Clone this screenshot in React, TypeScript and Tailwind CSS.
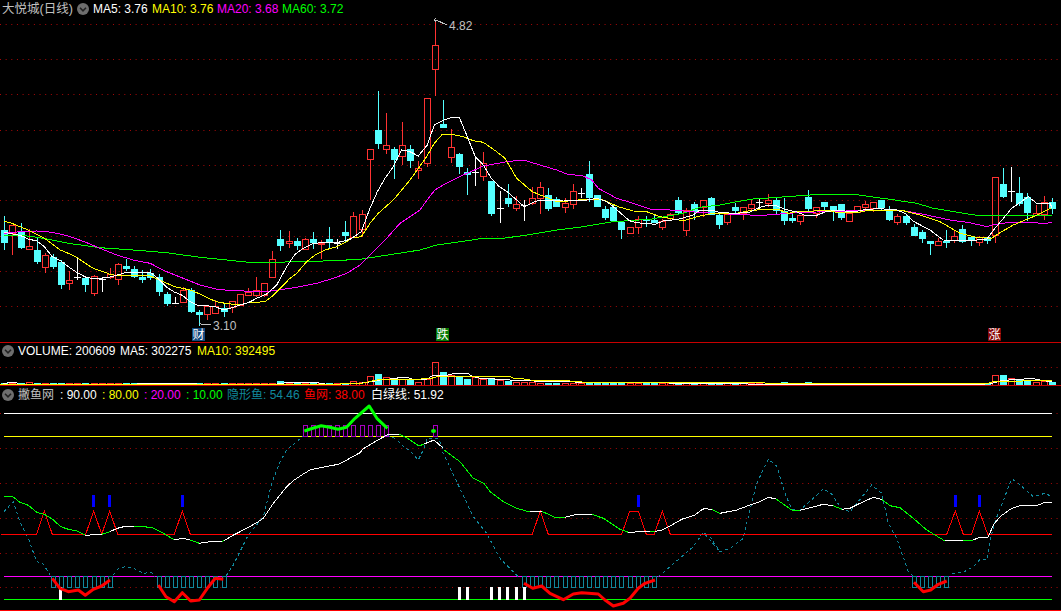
import React from "react";

type C = [string, number, number, number, number];
const candles: C[] = [
["c",216,230,243,250],["r",225,225,233,255],["c",223,232,248,249],["r",229,246,249,250],["c",237,250,262,264],["r",253,255,267,273],["c",254,257,267,269],["c",260,262,285,289],["r",271,280,283,290],["d",257,277,277,280],
["c",276,278,285,292],["r",275,276,293,296],["d",277,279,279,292],["r",268,274,277,279],["r",263,264,279,285],["c",259,266,269,271],["c",266,269,277,278],["c",270,277,280,283],["c",269,273,278,280],["c",274,277,292,296],
["c",292,294,304,306],["d",297,303,303,303],["r",287,290,302,303],["c",288,290,312,313],["c",310,312,315,326],["r",306,306,314,320],["r",300,306,313,313],["c",304,308,312,317],["r",301,301,307,313],["r",294,294,305,305],
["r",288,292,295,296],["r",277,290,295,297],["r",283,283,295,297],["r",251,259,277,277],["c",230,239,246,251],["r",231,241,243,248],["c",238,241,246,250],["r",238,239,249,250],["c",232,239,243,249],["r",240,243,244,259],
["c",227,239,243,248],["d",239,243,243,249],["c",221,232,236,243],["r",212,216,237,238],["r",210,214,229,237],["r",149,149,159,200],["c",91,130,144,149],["r",113,145,149,154],["c",147,149,160,179],["r",122,145,156,165],
["c",145,149,161,168],["r",161,168,170,179],["r",98,98,163,167],["r",20,45,69,96],["c",100,124,128,128],["r",129,147,157,163],["c",153,154,167,174],["c",168,172,175,195],["d",157,172,172,186],["r",152,163,176,181],
["c",181,181,214,216],["d",191,208,208,223],["c",184,198,204,207],["r",196,204,208,211],["d",200,205,205,221],["r",187,198,203,205],["r",182,187,198,214],["c",188,195,209,211],["c",197,199,207,207],["r",198,203,207,213],
["r",184,191,204,209],["d",188,193,193,198],["c",161,174,198,202],["c",195,195,207,207],["c",206,209,218,220],["c",205,207,221,222],["c",222,222,230,239],["r",227,227,233,233],["r",216,219,227,234],["c",216,219,221,227],
["c",214,220,223,223],["r",219,221,227,230],["r",213,214,218,220],["c",197,200,213,214],["r",208,210,230,236],["c",202,204,212,220],["r",200,200,207,217],["c",197,198,215,215],["c",213,215,225,229],["r",214,214,222,225],
["c",203,207,211,213],["r",207,207,213,220],["r",200,204,208,212],["d",199,202,202,209],["r",194,200,203,207],["c",198,200,211,214],["c",198,211,221,225],["c",214,218,221,223],["r",215,215,221,225],["c",190,197,209,211],
["r",207,207,213,218],["c",202,202,207,210],["c",206,206,212,221],["c",204,204,218,220],["r",213,213,221,221],["r",206,206,212,212],["r",201,204,207,211],["r",202,202,208,212],["c",200,200,208,210],["c",206,209,220,221],
["r",214,216,222,225],["c",214,216,223,225],["c",224,227,236,236],["c",230,232,239,243],["c",241,241,244,255],["r",238,241,245,246],["c",230,241,243,248],["r",231,236,240,243],["c",225,229,242,243],["c",237,237,241,246],
["r",236,237,242,246],["c",237,237,241,244],["r",177,177,235,243],["c",168,184,197,198],["d",167,191,191,202],["c",177,193,204,206],["c",193,197,213,221],["r",205,213,215,215],["r",196,202,214,220],["c",198,202,209,214],
];

const cx = (i: number) => Math.round(4.3 + 8.12 * i);

const volH: Record<number, number> = {3:3,34:4,43:4,44:3,45:9,46:11,47:8,48:5,49:6,50:5,51:3,52:6,53:23,54:13,55:10,56:8,57:6,58:8,59:6,60:7,61:5,62:4,63:3,64:3,65:3,96:3,99:3,122:10,123:10,124:7,125:5,126:4,127:3,128:4,129:3};

const Z = (ox: number, oy: number, p: number[], sx = 3, sy = 3) => {
  const out: string[] = [];
  for (let i = 0; i < p.length; i += 2) out.push(`${(ox + p[i] / sx).toFixed(1)},${(oy + p[i + 1] / sy).toFixed(1)}`);
  return out;
};

const maWhite = [
  ...Z(0,170,[12,187,60,196,85,207,110,213,133,230,157,260,181,272,205,290,230,307,258,322,282,326,328,322,352,315,376,308,452,308,470,322,500,352,523,366,547,376,570,395,595,407,620,407,646,410,670,420,694,414,720,405,745,398,770,385,800,372,830,345,860,290,885,253,910,235,935,222,960,218,1010,218,1035,212]),
  ...Z(350,10,[0,688,34,665,58,600,82,545,105,505,130,470,155,420,180,425,205,438,232,405,253,345,277,332,305,322,328,322,352,380,376,440,400,465,424,505,448,530,472,545,500,570,523,590,547,578,571,570,640,570,700,572,740,565,770,575,790,590,838,632,860,638,915,643,940,633,985,628,1030,615]),
  ...Z(700,150,[0,180,35,180,60,188,110,190,150,186,180,172,205,166,230,168,255,178,290,186,315,196,350,196,375,186,400,182,470,184,500,178,540,176,590,180,615,190,640,214,690,240,730,270,800,272,860,268,885,235,935,175,985,140,1010,160,1050,160,1057,175]),
].join(" ");
const maYellow = [
  ...Z(0,170,[12,153,35,160,60,170,85,180,110,193,133,205,157,222,181,240,205,250,230,262,256,280,280,295,304,303,328,312,352,317,376,317,450,318,475,328,523,350,571,360,600,372,625,385,650,395,675,400,720,405,745,398,795,395,815,380,845,350,870,325,890,310,920,275,945,255,975,240,1010,230,1040,215]),
  ...Z(350,10,[0,685,34,680,60,640,85,610,130,570,180,510,230,440,253,400,277,373,305,373,340,380,370,392,400,397,440,425,465,445,500,505,547,545,620,575,670,572,700,568,760,570,805,590,850,603,890,605,930,620,1000,632]),
  ...Z(700,150,[0,198,30,192,60,190,110,190,150,182,190,178,240,180,265,190,295,184,390,182,415,188,470,188,500,182,610,182,660,195,720,215,780,250,830,262,875,265,900,248,940,225,1000,200,1057,172]),
].join(" ");
const maMagenta = [
  ...Z(0,170,[12,190,60,185,110,183,157,187,205,198,253,215,300,235,350,255,400,270,450,280,500,305,550,325,600,345,650,358,700,362,800,365,850,358,900,350,950,340,1000,325,1040,310,1080,285]),
  ...Z(350,10,[75,720,110,685,150,640,210,600,235,565,255,540,280,525,340,495,400,468,470,455,520,450,570,465,620,480,650,492,700,498,725,510,745,535,800,565,850,580,900,597,960,600,1030,605]),
  ...Z(700,150,[0,188,60,190,110,194,190,196,240,192,290,188,350,186,420,184,500,180,610,182,670,193,750,210,810,218,860,230,880,224,920,218,1000,217,1020,220,1040,220,1057,217]),
].join(" ");
const maGreen = [
  ...Z(0,170,[12,195,60,195,110,202,157,210,205,220,300,233,400,240,500,248,600,262,700,272,760,278,900,275,1000,272,1080,268]),
  ...Z(350,10,[210,720,260,705,330,695,400,685,460,685,530,675,620,660,700,650,790,635,900,628,1000,610]),
  ...Z(700,150,[0,172,60,165,110,155,160,147,260,140,360,133,460,133,520,141,590,151,650,160,700,175,780,188,830,196,1057,196]),
].join(" ");

const volWhite = [
  ...Z(0,362,[0,68,24,62,50,62,55,67,410,67,415,64,530,64,590,66,680,68,830,66,860,62,950,62,975,66,1020,66]),
  ...Z(340,362,[0,66,60,64,100,58,130,52,170,50,175,46,200,46,220,52,260,52,275,42,320,40,345,34,385,35,395,42,425,50,500,52,520,56,640,58,700,60,1070,64]),
  ...Z(700,362,[0,65,100,65,240,68,870,66,900,57,945,52,1000,50,1025,55,1057,60]),
].join(" ");
const volYellow = [
  ...Z(0,362,[0,68,1020,67]),
  ...Z(340,362,[0,66,70,63,110,54,220,52,270,50,300,42,350,44,400,43,510,43,520,48,545,50,570,54,640,55,710,58,740,62,1070,62]),
  ...Z(700,362,[0,61,190,61,200,65,860,66,875,60,950,58,1000,55,1055,55]),
].join(" ");

const G = "#00ff00";
const W = "#ffffff";
const wl: [string, string[]][] = [
  [G, Z(0,450,[12,139,37,139,60,157,85,166,110,187,133,193,157,207,182,230,205,238,232,243,256,255])],
  [W, Z(0,450,[256,256,305,253])],
  [G, Z(0,450,[305,253,329,245])],
  [W, Z(0,450,[329,245,352,235,376,229,403,229])],
  [G, Z(0,450,[403,229,455,232,490,250,523,270])],
  [W, Z(0,450,[523,270,547,265,571,270])],
  [G, Z(0,450,[571,270,598,280])],
  [W, Z(0,450,[598,280,623,276,665,274])],
  [G, Z(0,450,[665,274,672,272])],
  [W, [...Z(0,450,[672,272,695,258,720,245,745,232,770,218,790,205,820,160,860,110,880,92,905,75,930,60,960,53,1015,43,1040,30,1080,8]), "363,449","375,441.7","387,435","399,434"]],
  [G, ["399,434","407,438","419,446","424,444"]],
  [W, ["424,444","434,440","443,448"]],
  [G, Z(360,450,[252,0,300,35,340,85,372,100,390,125,430,155,470,175,510,186])],
  [W, Z(360,450,[510,186,545,184])],
  [G, Z(360,450,[545,184,585,202,615,202])],
  [W, Z(360,450,[615,202,650,193,695,193])],
  [G, Z(360,450,[695,193,730,205,780,238,805,247])],
  [W, Z(360,450,[805,247,870,244])],
  [G, Z(360,450,[870,244,885,244])],
  [W, Z(360,450,[885,244,905,241,930,228,965,208,1005,195,1030,176,1055,178])],
  [G, Z(360,450,[1055,178,1080,190])],
  [W, Z(700,450,[0,182,12,176,35,178])],
  [G, Z(700,450,[35,178,60,190])],
  [W, Z(700,450,[60,190,110,180,150,165,180,155,205,142,228,147])],
  [G, Z(700,450,[228,147,275,180,300,181])],
  [W, Z(700,450,[300,181,370,163,400,167])],
  [G, Z(700,450,[400,167,425,178])],
  [W, Z(700,450,[425,178,450,175,480,160,520,142,545,148])],
  [G, Z(700,450,[545,148,570,167,600,173,640,205,680,240,735,273])],
  [W, Z(700,450,[735,273,790,271])],
  [G, Z(700,450,[790,271,818,271])],
  [W, Z(700,450,[818,271,835,263,865,261,880,225,900,200,935,175,960,167,1015,165,1035,157,1056,157])],
];

const teal = "#10889c";
const dashes: string[][] = [
  [...Z(0,450,[12,185,40,155,60,215,85,265,110,335,130,342,150,375])],
  [...Z(0,450,[340,375,355,355,375,350,400,355,430,370,455,367,465,380])],
  [...Z(0,450,[678,378,700,345,745,255,790,200,815,100,840,35,860,0]), "301,438", "308,430"],
  ["387,435", "396,439", "405,448", ...Z(360,450,[148,0,175,30,190,0]), "427,439", "438,438", "443,448", ...Z(360,450,[245,0,290,95,340,200,380,250,420,325,475,380])],
  [...Z(360,450,[895,380,1000,290,1030,247,1080,305])],
  [...Z(700,450,[0,258,10,248,30,260,60,305,90,295,130,265,145,200,170,100,205,28,230,48,255,130,275,178,300,181,370,117,395,132,425,178,450,185,515,105,545,130,565,220,590,265,625,365,640,378])],
  [...Z(700,450,[755,372,790,367,820,350,840,328,860,330,870,270,885,215,935,87,950,95,1000,140,1035,130,1056,140])],
];

const redThick: string[][] = [
  Z(0,450,[157,385,180,415,205,425,235,420,256,436,280,418,305,408,330,390]),
  Z(0,450,[475,405,498,440,523,455,547,428,572,453,598,450,622,415,646,385,670,388]),
  Z(360,450,[492,400,518,415,545,408,570,430,610,449,640,432,665,428,715,432,735,450,760,468,790,460,810,445,835,415,855,400,885,390]),
  Z(700,450,[642,397,670,425,692,420,715,403,740,393]),
];
const greenThick = Z(0,340,[900,273,925,265,950,257,975,262,1000,268,1025,262,1050,235,1092,198,1115,235,1146,265],2.958);

const triangles = [
  [...Z(0,450,[4,253,110,253,133,183,157,253,257,253,281,183,305,253,329,183,353,253,523,253,547,183,571,253]),
   ...Z(360,450,[517,253,541,183,565,253,785,253,809,183,835,183,859,253,883,253,907,183,931,253]),
   ...Z(700,450,[740,253,766,183,790,253,815,253,838,183,863,253,1056,253])],
];

const range = (a: number, b: number) => Array.from({ length: b - a + 1 }, (_, i) => a + i);
const tealBars = [...range(6, 13), ...range(19, 27), ...range(64, 80), ...range(112, 116)];
const purpleBars = [...range(37, 47), 53];
const blueBars = [93.5, 109, 182, 638, 955, 979];
const whiteSticks = [60, 459, 467, 491, 499, 507, 516, 524];

const Dotted = ({ y }: { y: number }) => (
  <line x1="0" x2="1061" y1={y + 0.5} y2={y + 0.5} stroke="#a80808" strokeDasharray="1 4.65" />
);

const Caret = () => (
  <svg width="12" height="12" viewBox="0 0 12 12" className="shrink-0">
    <circle cx="6" cy="6" r="6" fill="#6e6e6e" />
    <path d="M3 4.8 L6 7.8 L9 4.8" fill="none" stroke="#222222" strokeWidth="1.6" />
  </svg>
);

const font = "[font-family:'Liberation_Sans','Noto_Sans_CJK_SC',sans-serif]";

export default function App() {
  return (
    <div className={`w-[1061px] h-[611px] bg-black overflow-hidden flex flex-col text-[12px] leading-none whitespace-nowrap ${font}`}>
      {/* price panel */}
      <section className="relative h-[343px] shrink-0 border-b border-[#c80000] flex flex-col">
        <div className="h-[18px] shrink-0 flex items-center pl-[2px]">
          <span className="w-[75px] text-[12.5px] text-[#c0c0c0]">大悦城(日线)</span>
          <Caret />
          <span className="w-[59px] ml-[4px] text-white">MA5: 3.76</span>
          <span className="w-[65px] text-[#ffff00]">MA10: 3.76</span>
          <span className="w-[65px] text-[#ff00ff]">MA20: 3.68</span>
          <span className="text-[#00ff00]">MA60: 3.72</span>
        </div>
        <svg width="1061" height="324" viewBox="0 18 1061 324" className="block shrink-0">
          {[24, 59, 94, 130, 165, 200, 236, 271, 306].map((y) => <Dotted key={y} y={y} />)}
          <g shapeRendering="crispEdges">
            {candles.map(([t, h, top, bot, low], i) => {
              const x = cx(i);
              if (t === "d") {
                return (
                  <g key={i} stroke="#ffffff">
                    <line x1={x + 0.5} x2={x + 0.5} y1={h} y2={low} />
                    <line x1={x - 3} x2={x + 4} y1={top + 0.5} y2={top + 0.5} />
                  </g>
                );
              }
              if (t === "c") {
                return (
                  <g key={i}>
                    <line x1={x + 0.5} x2={x + 0.5} y1={h} y2={low} stroke="#54ffff" />
                    <rect x={x - 3} y={top} width="7" height={bot - top} fill="#54ffff" />
                  </g>
                );
              }
              return (
                <g key={i} stroke="#ff3232">
                  <line x1={x + 0.5} x2={x + 0.5} y1={h} y2={top} />
                  <line x1={x + 0.5} x2={x + 0.5} y1={bot} y2={low} />
                  <rect x={x - 2.5} y={top + 0.5} width="6" height={bot - top} fill="none" />
                </g>
              );
            })}
            <polyline points={maGreen} fill="none" stroke="#00ff00" />
            <polyline points={maMagenta} fill="none" stroke="#ff00ff" />
            <polyline points={maYellow} fill="none" stroke="#ffff00" />
            <polyline points={maWhite} fill="none" stroke="#ffffff" />
            <polyline points="434,20 436,20 447,25" fill="none" stroke="#c0c0c0" />
            <polyline points="436,18 434,20 436,22" fill="none" stroke="#c0c0c0" />
            <polyline points="199,323 201,324 211,324" fill="none" stroke="#c0c0c0" />
          </g>
          <text x="449" y="30" fontSize="12" fill="#c0c0c0">4.82</text>
          <text x="213" y="329.5" fontSize="12" fill="#c0c0c0">3.10</text>
        </svg>
        <span className="absolute left-[192px] top-[328px] w-[13px] h-[13px] flex items-center justify-center bg-[#12497e] text-white">财</span>
        <span className="absolute left-[436px] top-[328px] w-[13px] h-[13px] flex items-center justify-center bg-[#067a06] text-white">跌</span>
        <span className="absolute left-[988px] top-[328px] w-[13px] h-[13px] flex items-center justify-center bg-[#860606] text-white">涨</span>
      </section>

      {/* volume panel */}
      <section className="h-[43px] shrink-0 flex flex-col">
        <div className="h-[16px] shrink-0 flex items-center pl-[2px]">
          <Caret />
          <span className="w-[102px] ml-[4px] text-white">VOLUME: 200609</span>
          <span className="w-[77px] text-white">MA5: 302275</span>
          <span className="text-[#ffff00]">MA10: 392495</span>
        </div>
        <svg width="1061" height="27" viewBox="0 359 1061 27" className="block shrink-0">
          <Dotted y={367} />
          <g shapeRendering="crispEdges">
            {candles.map(([t], i) => {
              const h = volH[i] ?? 2;
              const x = cx(i);
              return t === "c" ? (
                <rect key={i} x={x - 3} y={385 - h} width="7" height={h} fill="#54ffff" />
              ) : (
                <rect key={i} x={x - 2.5} y={385.5 - h} width="6" height={h} fill="none" stroke="#ff3232" />
              );
            })}
            <polyline points={volWhite} fill="none" stroke="#ffffff" />
            <polyline points={volYellow} fill="none" stroke="#ffff00" />
            <line x1="0" x2="1061" y1="385.5" y2="385.5" stroke="#c80000" />
          </g>
        </svg>
      </section>

      {/* indicator panel */}
      <section className="flex-1 flex flex-col">
        <div className="h-[17px] shrink-0 flex items-center pl-[2px]">
          <Caret />
          <span className="w-[42px] ml-[4px] text-[12px] text-[#c0c0c0]">撇鱼网</span>
          <span className="w-[42px] text-white">: 90.00</span>
          <span className="w-[42px] text-[#ffff00]">: 80.00</span>
          <span className="w-[42px] text-[#ff00ff]">: 20.00</span>
          <span className="w-[41px] text-[#00ff00]">: 10.00</span>
          <span className="w-[77px] text-[#10889c]">隐形鱼: 54.46</span>
          <span className="w-[67px] text-[#ff0000]">鱼网: 38.00</span>
          <span className="text-white">白绿线: 51.92</span>
        </div>
        <svg width="1061" height="208" viewBox="0 403 1061 208" className="block shrink-0">
          {[413, 448, 483, 518, 553, 587].map((y) => <Dotted key={y} y={y} />)}
          <g shapeRendering="crispEdges">
            <line x1="4" x2="1052" y1="413.5" y2="413.5" stroke="#ffffff" />
            <line x1="4" x2="1052" y1="436.5" y2="436.5" stroke="#ffff00" />
            <line x1="4" x2="1052" y1="576.5" y2="576.5" stroke="#ff00ff" />
            <line x1="4" x2="1052" y1="599.5" y2="599.5" stroke="#00ff00" />
            <line x1="0" x2="1061" y1="610.5" y2="610.5" stroke="#ff0000" />
            {dashes.map((d, i) => (
              <polyline key={i} points={d.join(" ")} fill="none" stroke={teal} strokeDasharray="3 3" />
            ))}
            {tealBars.map((i) => (
              <rect key={i} x={cx(i) - 1.5} y="576.5" width="4" height="11" fill="none" stroke={teal} />
            ))}
            {purpleBars.map((i) => (
              <rect key={i} x={cx(i) - 1.5} y="425.5" width="4" height="11" fill="none" stroke="#a800c0" />
            ))}
            {triangles.map((t, i) => (
              <polyline key={i} points={t.join(" ")} fill="none" stroke="#ff0000" />
            ))}
            {wl.map(([c, p], i) => (
              <polyline key={i} points={p.join(" ")} fill="none" stroke={c} />
            ))}
            {blueBars.map((x) => (
              <rect key={x} x={x - 1.5} y="495" width="3" height="12" fill="#0000ff" />
            ))}
            {whiteSticks.map((x) => (
              <rect key={x} x={x - 1} y="587" width="3" height="13" fill="#ffffff" />
            ))}
          </g>
          {redThick.map((p, i) => (
            <polyline key={i} points={p.join(" ")} fill="none" stroke="#ff0000" strokeWidth="3" strokeLinejoin="round" />
          ))}
          <polyline points={greenThick.join(" ")} fill="none" stroke="#00ff00" strokeWidth="3" strokeLinejoin="round" />
          <ellipse cx="433.5" cy="431" rx="2.5" ry="2" fill="#00ff00" />
        </svg>
      </section>
    </div>
  );
}
